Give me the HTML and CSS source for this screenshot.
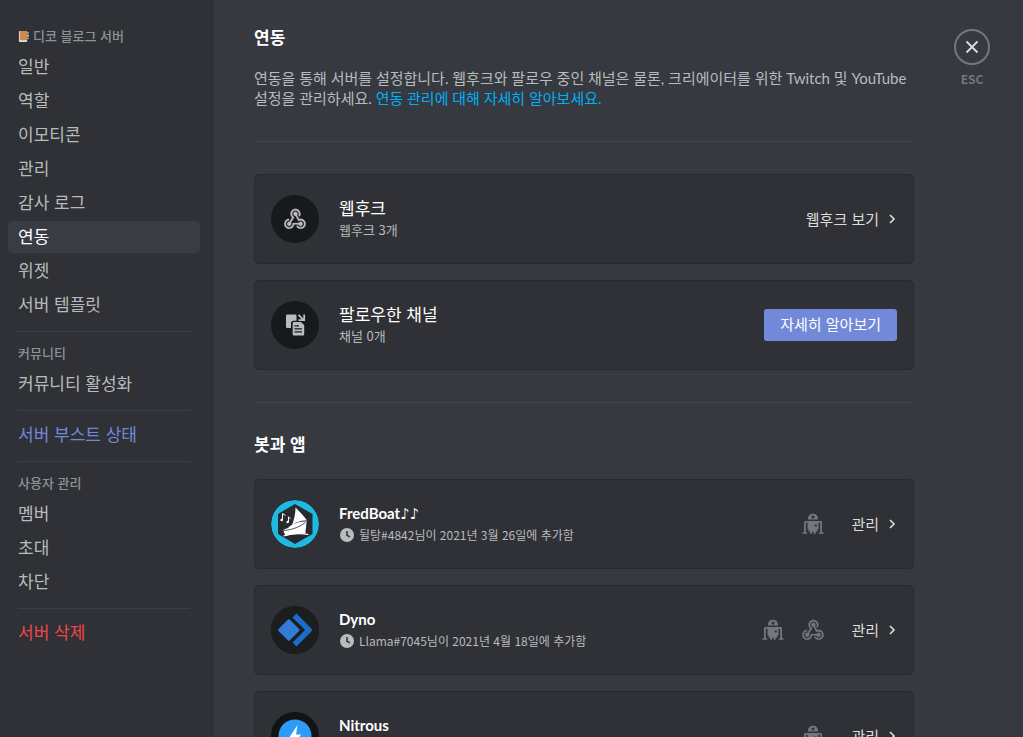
FILE: index.html
```html
<!DOCTYPE html>
<html lang="ko">
<head>
    <meta charset="UTF-8">
    <meta name="viewport" content="width=device-width, initial-scale=1.0">
    <title>연동</title>
    <link rel="stylesheet" href="styles.css">
</head>
<body>
    <!-- Shared icons -->
    <svg class="icon-defs" aria-hidden="true">
        <symbol id="icon-webhook" viewBox="2 2 20 20">
            <path fill="currentColor" stroke="currentColor" stroke-width="0.2" d="M10.46,19C9,21.07 6.15,21.59 4.09,20.15C2.04,18.71 1.56,15.84 3,13.75C3.87,12.5 5.21,11.83 6.58,11.77L6.63,13.2C5.72,13.27 4.84,13.74 4.27,14.56C3.27,16 3.58,17.94 4.95,18.91C6.33,19.87 8.26,19.5 9.26,18.07C9.57,17.62 9.75,17.13 9.82,16.63V15.62L15.4,15.58L15.47,15.47C16,14.55 17.15,14.23 18.05,14.75C18.95,15.27 19.26,16.43 18.73,17.35C18.2,18.26 17.04,18.58 16.14,18.06C15.73,17.83 15.44,17.46 15.31,17.04L11.24,17.06C11.13,17.73 10.87,18.38 10.46,19M17.74,11.86C20.27,12.17 22.07,14.44 21.76,16.93C21.45,19.43 19.15,21.2 16.62,20.89C15.13,20.71 13.9,19.86 13.19,18.68L14.43,17.96C14.92,18.73 15.75,19.28 16.75,19.41C18.5,19.62 20.05,18.43 20.26,16.76C20.47,15.09 19.23,13.56 17.5,13.35C16.96,13.29 16.44,13.36 15.97,13.53L15.12,13.97L12.54,9.2H12.32C11.26,9.16 10.41,8.29 10.44,7.25C10.47,6.21 11.4,5.4 12.45,5.44C13.5,5.5 14.33,6.35 14.3,7.39C14.28,7.83 14.11,8.23 13.84,8.54L15.74,12.05C16.36,11.85 17.04,11.78 17.74,11.86M8.25,9.14C7.25,6.79 8.31,4.1 10.62,3.12C12.94,2.14 15.62,3.25 16.62,5.6C17.21,6.97 17.09,8.47 16.42,9.67L15.18,8.95C15.6,8.14 15.67,7.15 15.27,6.22C14.59,4.62 12.78,3.85 11.23,4.5C9.67,5.16 8.97,7 9.65,8.6C9.93,9.26 10.4,9.77 10.97,10.11L11.36,10.32L8.29,15.31C8.32,15.36 8.36,15.42 8.39,15.5C8.88,16.41 8.54,17.56 7.62,18.05C6.71,18.54 5.56,18.18 5.06,17.24C4.57,16.31 4.91,15.16 5.83,14.67C6.22,14.46 6.65,14.41 7.06,14.5L9.37,10.73C8.9,10.3 8.5,9.76 8.25,9.14Z"/>
        </symbol>
        <symbol id="icon-bot" viewBox="0 0 22 22">
            <path fill="currentColor" fill-rule="evenodd" d="M6 6.500V5.300C6 2.700 8.200.7 11 .7s5 2 5 4.600v1.200zM11 2.600a1.500 1.500 0 1 0 0 3 1.500 1.500 0 0 0 0-3z"/>
            <path fill="currentColor" d="M3.500 8h15c.9 0 1.500.7 1.500 1.500V19c1 0 1.700.6 1.700 1.700h-5c0-1 .6-1.700 1.500-1.700V9.800H3.800V19c1 0 1.500.7 1.500 1.700h-5C.3 19.600 1 19 2 19V9.500C2 8.700 2.600 8 3.500 8z"/>
            <path fill="currentColor" fill-rule="evenodd" d="M5.500 8h11v8.500h-1.200v2.200h-1.500v2h-2v-2h-1.600v2h-2v-2H6.700v-2.200H5.500zM12.800 11.500v2h2v-2z"/>
        </symbol>
        <symbol id="icon-clock" viewBox="0 0 14 14">
            <circle cx="7" cy="7" r="7" fill="currentColor"/>
            <path d="M7 3v4.200l2.800 1.600" fill="none" stroke="#2f3136" stroke-width="1.500"/>
        </symbol>
        <symbol id="icon-chevron" viewBox="0 0 10 10">
            <path d="M3 1l4 4-4 4" fill="none" stroke="currentColor" stroke-width="1.600"/>
        </symbol>
    </svg>

    <div class="layout">
        <nav class="sidebar">
            <h2 class="nav-header">
                <svg class="nav-emoji" viewBox="0 0 12 12" aria-hidden="true">
                    <path d="M9 1h3v2H9z" fill="#3fa4c9"/>
                    <path d="M9 4h3v2H9z" fill="#e8c34a"/>
                    <path d="M9 7h3v2H9z" fill="#3fa4c9"/>
                    <rect x="1" y="0" width="9" height="12" rx="1" fill="#e8e0d8"/>
                    <rect x="2" y="0" width="8" height="10" rx="1" fill="#d08a50"/>
                </svg>
                <span>디코 블로그 서버</span>
            </h2>
            <a class="nav-item" href="#">일반</a>
            <a class="nav-item" href="#">역할</a>
            <a class="nav-item" href="#">이모티콘</a>
            <a class="nav-item" href="#">관리</a>
            <a class="nav-item" href="#">감사 로그</a>
            <a class="nav-item active" href="#" aria-current="page">연동</a>
            <a class="nav-item" href="#">위젯</a>
            <a class="nav-item" href="#">서버 템플릿</a>
            <hr class="nav-separator">
            <h2 class="nav-header">커뮤니티</h2>
            <a class="nav-item" href="#">커뮤니티 활성화</a>
            <hr class="nav-separator">
            <a class="nav-item boost" href="#">서버 부스트 상태</a>
            <hr class="nav-separator">
            <h2 class="nav-header">사용자 관리</h2>
            <a class="nav-item" href="#">멤버</a>
            <a class="nav-item" href="#">초대</a>
            <a class="nav-item" href="#">차단</a>
            <hr class="nav-separator">
            <a class="nav-item danger" href="#">서버 삭제</a>
        </nav>

        <main class="content">
            <h1 class="title">연동</h1>
            <p class="description">연동을 통해 서버를 설정합니다. 웹후크와 팔로우 중인 채널은 물론, 크리에이터를 위한 Twitch 및 YouTube 설정을 관리하세요. <a href="#">연동 관리에 대해 자세히 알아보세요.</a></p>
            <hr class="divider">

            <section class="card-list">
                <div class="card">
                    <div class="avatar">
                        <svg class="icon" aria-hidden="true"><use href="#icon-webhook"/></svg>
                    </div>
                    <div class="card-text">
                        <h3 class="card-name">웹후크</h3>
                        <p class="card-detail">웹후크 3개</p>
                    </div>
                    <button class="link-button" type="button">웹후크 보기
                        <svg class="chevron" aria-hidden="true"><use href="#icon-chevron"/></svg>
                    </button>
                </div>
                <div class="card">
                    <div class="avatar">
                        <svg class="icon" viewBox="0 0 22 22" aria-hidden="true">
                            <path fill="currentColor" d="M3.500.5H11c.8 0 1.500.7 1.500 1.500v4.700H9.500C8 6.700 7 7.700 7 9.200V14H3.500C2.500 14 2 13.500 2 12.500V2c0-.8.5-1.500 1.500-1.500z"/>
                            <path fill="none" stroke="currentColor" stroke-width="1.800" d="M14.500.8l5 5M20.200.5v5.600h-5.700"/>
                            <path fill="currentColor" fill-rule="evenodd" d="M10.200 7.900h6.600l3.400 3V20c0 1-.5 1.500-1.500 1.500h-8.500c-1 0-1.500-.5-1.500-1.500V9.400c0-1 .5-1.500 1.500-1.500zM10.500 11.200v1.200H15v-1.200zM10.500 14.200v1.200H18v-1.200zM10.500 17.200v1.200H18v-1.200z"/>
                        </svg>
                    </div>
                    <div class="card-text">
                        <h3 class="card-name">팔로우한 채널</h3>
                        <p class="card-detail">채널 0개</p>
                    </div>
                    <button class="primary-button" type="button">자세히 알아보기</button>
                </div>
            </section>

            <hr class="divider">
            <h2 class="title">봇과 앱</h2>

            <section class="card-list apps">
                <div class="card">
                    <svg class="avatar" viewBox="0 0 48 48" aria-hidden="true">
                        <circle cx="24" cy="24" r="24" fill="#1fb8e0"/>
                        <path d="M24 4l17.500 10v20L24 44 7 34V14z" fill="#272b31"/>
                        <path d="M24.500 7.500C28 11 32 15 36 20.500c-5-.5-10 1-15 4.500 2-5 3.500-11 3.500-17.500z" fill="#fff"/>
                        <path d="M19 26c5-3.500 11-5 17-4.500-.8 2-1 4-.8 6-.7 3-1.200 4-.2 6-7 0-13 .3-20 2.300-1.500-1.500-2.500-4-2.500-6L17 28z" fill="#fff"/>
                        <path d="M12.500 30.500c8-.5 15-3 22-8" fill="none" stroke="#272b31" stroke-width="0.800"/>
                        <path d="M12.500 36c8-2.500 16-3 25-1.500" fill="none" stroke="#fff" stroke-width="1.200"/>
                        <path d="M11.500 20v-6.500l3 2M17.500 22v-5l2 1.500" fill="none" stroke="#fff" stroke-width="1"/>
                        <circle cx="10.700" cy="20" r="1.300" fill="#fff"/>
                        <circle cx="16.700" cy="22" r="1.200" fill="#fff"/>
                    </svg>
                    <div class="card-text">
                        <h3 class="card-name">FredBoat♪♪</h3>
                        <p class="card-detail">
                            <svg class="clock" aria-hidden="true"><use href="#icon-clock"/></svg>
                            뒬탕#4842님이 2021년 3월 26일에 추가함
                        </p>
                    </div>
                    <div class="features">
                        <svg class="icon" aria-hidden="true"><use href="#icon-bot"/></svg>
                    </div>
                    <button class="link-button" type="button">관리
                        <svg class="chevron" aria-hidden="true"><use href="#icon-chevron"/></svg>
                    </button>
                </div>
                <div class="card">
                    <svg class="avatar" viewBox="0 0 48 48" aria-hidden="true">
                        <circle cx="24" cy="24" r="24" fill="#1c1d1e"/>
                        <path d="M17.800 14.800L27 24l-9.200 9.200L8.600 24z" fill="#327cd8" stroke="#327cd8" stroke-width="3" stroke-linejoin="round"/>
                        <path d="M23.500 9.500L38 24 23.500 38.500" fill="none" stroke="#1c6cca" stroke-width="5.500" stroke-linejoin="round"/>
                    </svg>
                    <div class="card-text">
                        <h3 class="card-name">Dyno</h3>
                        <p class="card-detail">
                            <svg class="clock" aria-hidden="true"><use href="#icon-clock"/></svg>
                            Llama#7045님이 2021년 4월 18일에 추가함
                        </p>
                    </div>
                    <div class="features">
                        <svg class="icon" aria-hidden="true"><use href="#icon-bot"/></svg>
                        <svg class="icon" aria-hidden="true"><use href="#icon-webhook"/></svg>
                    </div>
                    <button class="link-button" type="button">관리
                        <svg class="chevron" aria-hidden="true"><use href="#icon-chevron"/></svg>
                    </button>
                </div>
                <div class="card">
                    <svg class="avatar" viewBox="0 0 48 48" aria-hidden="true">
                        <circle cx="24" cy="24" r="24" fill="#111314"/>
                        <circle cx="24" cy="24" r="16.500" fill="#2e9bf7"/>
                        <path d="M26.500 13l-8.500 13h5l-2 10 9-13.500h-5z" fill="#fff"/>
                    </svg>
                    <div class="card-text">
                        <h3 class="card-name">Nitrous</h3>
                    </div>
                    <div class="features">
                        <svg class="icon" aria-hidden="true"><use href="#icon-bot"/></svg>
                    </div>
                    <button class="link-button" type="button">관리
                        <svg class="chevron" aria-hidden="true"><use href="#icon-chevron"/></svg>
                    </button>
                </div>
            </section>
        </main>

        <div class="tools">
            <button class="close-button" type="button" aria-label="닫기">
                <svg class="close-icon" viewBox="0 0 14 14" aria-hidden="true">
                    <path d="M1.500 1.500l11 11M12.500 1.500l-11 11" fill="none" stroke="currentColor" stroke-width="1.800"/>
                </svg>
            </button>
            <span class="close-label">ESC</span>
        </div>
    </div>
</body>
</html>
```
FILE: styles.css
```css
* {
    margin: 0;
    padding: 0;
    box-sizing: border-box;
}

body {
    font-family: "Noto Sans CJK KR", "Noto Sans", sans-serif;
    background-color: #36393f;
    color: #dcddde;
    overflow: hidden;
}

button {
    font-family: inherit;
    border: none;
    background: none;
    cursor: pointer;
}

a {
    text-decoration: none;
}

.icon-defs {
    display: none;
}

.layout {
    display: flex;
    height: 100vh;
}

/* Sidebar */
.sidebar {
    display: flex;
    flex-direction: column;
    flex: 0 0 214px;
    padding: 23px 14px 0 8px;
    background-color: #2f3136;
}

.nav-header {
    display: flex;
    align-items: center;
    gap: 4px;
    padding: 5px 10px 7px;
    font-size: 13px;
    font-weight: 500;
    line-height: 16px;
    color: #8e9297;
}

.nav-emoji {
    width: 11px;
    height: 11px;
}

.nav-item {
    padding: 5px 10px 7px;
    margin-bottom: 2px;
    border-radius: 4px;
    font-size: 17px;
    line-height: 20px;
    color: #b9bbbe;
}

.nav-item:hover {
    background-color: #34373c;
}

.nav-item.active {
    background-color: #393c43;
    color: #fff;
}

.nav-item.boost {
    color: #7289da;
}

.nav-item.danger {
    color: #f04747;
}

.nav-separator {
    flex-shrink: 0;
    height: 1px;
    margin: 8px 10px;
    border: none;
    background-color: #3b3e43;
}

/* Content */
.content {
    flex: 1;
    max-width: 740px;
    padding: 28px 40px 0;
}

.title {
    font-size: 17px;
    font-weight: 700;
    line-height: 18px;
    color: #fff;
}

.description {
    margin: 22px 0 33px;
    font-family: "Lato", "Noto Sans CJK KR", sans-serif;
    font-size: 15px;
    line-height: 20px;
    color: #b9bbbe;
}

.description a {
    color: #00b0f4;
}

.divider {
    height: 1px;
    margin: 32px 0;
    border: none;
    background-color: #424549;
}

.card-list {
    display: flex;
    flex-direction: column;
    gap: 16px;
}

.apps {
    margin-top: 26px;
}

.card {
    display: flex;
    align-items: center;
    flex-shrink: 0;
    min-height: 90px;
    padding: 20px 16px;
    border: 1px solid #27292d;
    border-radius: 5px;
    background-color: #2f3136;
}

.avatar {
    display: flex;
    align-items: center;
    justify-content: center;
    flex-shrink: 0;
    width: 48px;
    height: 48px;
    border-radius: 50%;
    background-color: #18191c;
    color: #b9bbbe;
}

.icon {
    width: 22px;
    height: 22px;
}

.card-text {
    flex: 1;
    align-self: flex-start;
    margin-left: 20px;
}

.card-name {
    margin-top: 3px;
    font-size: 17px;
    font-weight: 400;
    line-height: 20px;
    color: #fff;
}

.apps .card-name {
    font-family: "Lato", "DejaVu Sans", sans-serif;
    font-size: 15px;
    font-weight: 700;
}

.card-detail {
    display: flex;
    align-items: center;
    gap: 5px;
    margin-top: 4px;
    font-size: 13px;
    line-height: 16px;
    color: #b9bbbe;
}

.apps .card-detail {
    font-size: 12px;
}

.clock {
    width: 14px;
    height: 14px;
    margin-left: 1px;
}

.features {
    display: flex;
    gap: 18px;
    color: #72767d;
}

.link-button {
    display: flex;
    align-items: center;
    gap: 8px;
    margin-left: 27px;
    font-size: 15px;
    line-height: 20px;
    color: #dcddde;
}

.chevron {
    width: 10px;
    height: 10px;
}

.primary-button {
    height: 32px;
    padding: 0 16px 2px;
    border-radius: 3px;
    background-color: #7289da;
    font-size: 15px;
    line-height: 20px;
    color: #fff;
}

/* Close button */
.tools {
    display: flex;
    flex-direction: column;
    align-items: center;
    align-self: flex-start;
    width: 36px;
    margin: 29px 33px 0 0;
}

.close-button {
    display: flex;
    align-items: center;
    justify-content: center;
    width: 36px;
    height: 36px;
    border: 2px solid #72767d;
    border-radius: 50%;
    color: #dcddde;
}

.close-icon {
    width: 14px;
    height: 14px;
}

.close-label {
    margin-top: 5px;
    font-size: 12px;
    font-weight: 700;
    line-height: 18px;
    color: #72767d;
}
```
